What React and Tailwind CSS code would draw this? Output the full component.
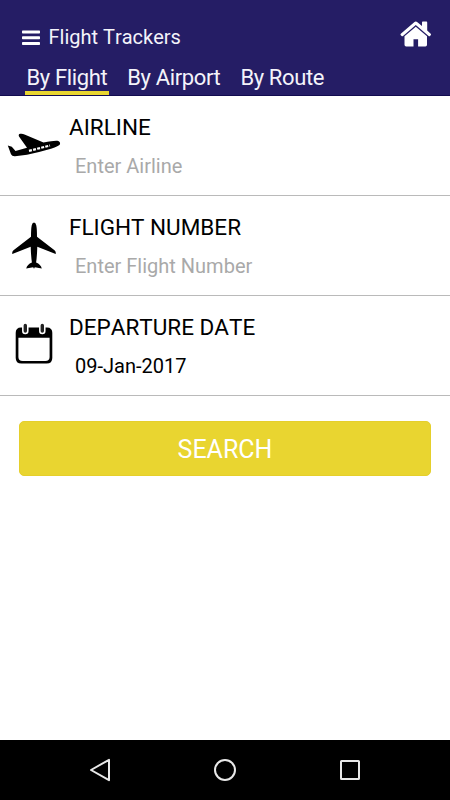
import { useState } from "react";

const tabs = ["By Flight", "By Airport", "By Route"];

function MenuIcon() {
  return (
    <svg width="18" height="16" viewBox="0 0 18 16" fill="#fff">
      <rect x="0" y="0.5" width="18" height="3" rx="0.7" />
      <rect x="0" y="6.3" width="18" height="3" rx="0.7" />
      <rect x="0" y="12" width="18" height="3" rx="0.7" />
    </svg>
  );
}

function HomeIcon() {
  return (
    <svg width="32" height="26" viewBox="0 0 32 26" fill="#fff">
      <path d="M22 1.4Q22 .6 22.8 .6H26.4Q27.2 .6 27.2 1.4V9.6L30.7 12.8Q31.4 13.5 30.7 14.3L30 15Q29.3 15.5 28.6 14.9L15.8 4 3 14.9Q2.3 15.5 1.6 15L.8 14.3Q.1 13.5.8 12.8L14.2 1.2Q15.8 0 17.4 1.2L22 5.1Z" />
      <path d="M15.8 5.8L27 15.3V23.8Q27 25.4 25.4 25.4H18.1V18.3H13.5V25.4H6.2Q4.5 25.4 4.5 23.8V15.3Z" />
    </svg>
  );
}

function TakeoffIcon() {
  return (
    <svg width="54" height="26" viewBox="0 0 54 26">
      <path d="M.8 12.600L4.800 13.700 8.500 18 20 14.700 12 3.500Q11 1.300 13.200 .8 15.500 .4 17.500 1.500L36.500 9.500Q47 7.400 50.500 7.800 53.500 8.700 53 11.300 52 13.200 44 15.800 32 19.400 20 21.700L8 23.300Q5 23.500 4 21.300Z" />
      <path d="M22 17.900L43 12.500" stroke="#fff" strokeWidth="2.200" strokeDasharray="3 1.200" />
    </svg>
  );
}

function PlaneIcon() {
  return (
    <svg width="44" height="48" viewBox="0 0 44 48">
      <path d="M22 .5Q23.700 .5 24.300 3.500 25 7 25 14.700L42.500 28.200Q44.200 29.700 43.700 32L25.300 24.800Q25 34.500 24.100 40.400 28.800 42.300 29.800 46.400L22.800 45.200 22 46.700 21.200 45.200 14.200 46.400Q15.200 42.300 19.900 40.400 19 34.500 18.700 24.800L.3 32Q-.2 29.700 1.500 28.200L19 14.700Q19 7 19.700 3.500 20.300 .5 22 .5Z" />
    </svg>
  );
}

function CalendarIcon() {
  return (
    <svg width="38" height="42" viewBox="0 0 38 42">
      <path d="M6 4.500H32Q37.300 4.500 37.300 10V35Q37.300 40.500 31.500 40.500H6.500Q.7 40.500 .7 35V10Q.7 4.500 6 4.500Z" />
      <path d="M3.400 14.700H34.600V34Q34.600 38 30.300 38H7.700Q3.400 38 3.400 34Z" fill="#fff" />
      <g fill="none" strokeLinecap="round">
        <path d="M10.300 3.300V8M27.300 3.300V8" stroke="#fff" strokeWidth="6.500" />
        <path d="M10.300 2.400V8.100M27.300 2.400V8.100" stroke="#222" strokeWidth="3.400" />
      </g>
    </svg>
  );
}

function Field({ icon, label, children }) {
  return (
    <label className="flex h-[100px] border-b border-[#bababa]">
      <span className="flex w-[69px] shrink-0 justify-center pr-px">{icon}</span>
      <span className="flex flex-col pt-[18px]">
        <span className="text-[22.5px] leading-[26px] [font-kerning:none]">{label}</span>
        <span className="mt-[13px] flex h-[26px] pl-[6px]">{children}</span>
      </span>
    </label>
  );
}

function App() {
  const [active, setActive] = useState("By Flight");
  const [airline, setAirline] = useState("");
  const [flightNumber, setFlightNumber] = useState("");

  return (
    <div className="flex h-[800px] w-[450px] flex-col bg-white font-['Roboto',sans-serif] text-black">
      <header className="flex h-24 flex-col border-b border-[#120b50] bg-[#251d65] text-[#f4f3fa]">
        <div className="flex h-[59px] items-start justify-between pr-[18px] pl-[22px]">
          <div className="flex items-center gap-[9px] pt-[25px]">
            <button aria-label="Menu" className="pt-px">
              <MenuIcon />
            </button>
            <h1 className="-ml-[0.5px] text-[20px] leading-6 [font-kerning:none]">Flight Trackers</h1>
          </div>
          <button aria-label="Home" className="pt-[21px]">
            <HomeIcon />
          </button>
        </div>
        <nav className="flex h-[37px] gap-[17px] pl-[25px]">
          {tabs.map((tab) => (
            <button
              key={tab}
              onClick={() => setActive(tab)}
              className={
                "h-[37px] border-b-4 px-[1.500px] pt-[6px] text-[22px] leading-[26px] tracking-[-0.37px] whitespace-nowrap " +
                (active === tab ? "border-[#e8d52f]" : "border-transparent")
              }
            >
              {tab}
            </button>
          ))}
        </nav>
      </header>

      <main className="grow">
        <Field label="AIRLINE" icon={<span className="pt-[37px]"><TakeoffIcon /></span>}>
          <input
            value={airline}
            onChange={(e) => setAirline(e.target.value)}
            placeholder="Enter Airline"
            className="w-[300px] text-[20px] outline-none placeholder:text-[#a9a9a9]"
          />
        </Field>
        <Field label="FLIGHT NUMBER" icon={<span className="pt-[26px]"><PlaneIcon /></span>}>
          <input
            value={flightNumber}
            onChange={(e) => setFlightNumber(e.target.value)}
            placeholder="Enter Flight Number"
            className="w-[300px] text-[20px] outline-none placeholder:text-[#a9a9a9]"
          />
        </Field>
        <Field label="DEPARTURE DATE" icon={<span className="pt-[27px]"><CalendarIcon /></span>}>
          <span className="text-[20px] leading-[26px]">09-Jan-2017</span>
        </Field>
        <div className="px-[19px] pt-[25px]">
          <button className="h-[55px] w-full rounded-[5px] border border-[#e5cf2b] bg-[#e9d530] pt-0.5 text-[25px] text-white">
            SEARCH
          </button>
        </div>
      </main>

      <footer className="flex h-[60px] items-center justify-between bg-black pr-[89px] pl-[89px]">
        <svg width="22" height="24" viewBox="0 0 22 24" fill="none" stroke="#e8e8e8" strokeWidth="2">
          <path d="M2 12L20 1.800V22.200Z" strokeLinejoin="round" />
        </svg>
        <svg width="22" height="22" viewBox="0 0 22 22" fill="none" stroke="#e8e8e8" strokeWidth="2">
          <circle cx="11" cy="11" r="10" />
        </svg>
        <svg width="22" height="20" viewBox="0 0 22 20" fill="none" stroke="#e8e8e8" strokeWidth="2">
          <rect x="2" y="1" width="18" height="18" rx="0.500" />
        </svg>
      </footer>
    </div>
  );
}

export default App;
